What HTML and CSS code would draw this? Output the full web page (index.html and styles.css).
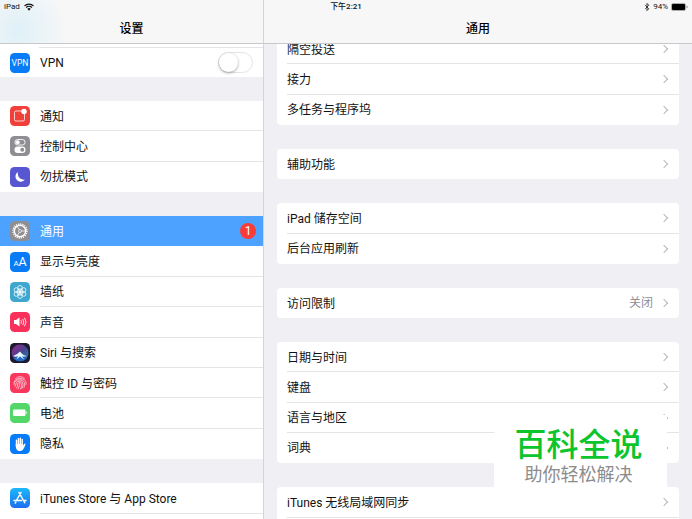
FILE: index.html
```html
<!DOCTYPE html>
<html lang="zh-CN">
<head>
    <meta charset="UTF-8">
    <meta name="viewport" content="width=device-width, initial-scale=1.0">
    <title>设置</title>
    <link rel="stylesheet" href="styles.css">
</head>
<body>
    <div class="status-bar">
        <div class="status-left">
            <span>iPad</span>
            <svg width="10" height="8" viewBox="0 0 20 15">
                <path d="M1 5.2a13 13 0 0 1 18 0M4.2 8.6a8.3 8.3 0 0 1 11.6 0" fill="none" stroke="#111" stroke-width="2.6"/>
                <path d="M10 14.8l-3.4-3.6a4.8 4.8 0 0 1 6.8 0z" fill="#111"/>
            </svg>
        </div>
        <div class="status-time">下午2:21</div>
        <div class="status-right">
            <svg width="6" height="8" viewBox="0 0 12 18">
                <path d="M2 5l8 8-4 4V1l4 4-8 8" fill="none" stroke="#222" stroke-width="1.9"/>
            </svg>
            <span>94%</span>
            <svg width="17" height="8" viewBox="0 0 17 8">
                <rect x="0.5" y="0.5" width="14" height="7" rx="1.5" fill="#fff" stroke="#777" stroke-width="0.6"/>
                <rect x="1" y="1" width="13" height="6" rx="1" fill="#000"/>
                <path d="M15.6 2.6v2.8q1-.4 1-1.4t-1-1.4z" fill="#777"/>
            </svg>
        </div>
    </div>

    <div class="split">
        <aside class="sidebar">
            <header class="title-bar title-bar-tint"><h1>设置</h1></header>
            <nav class="sidebar-list">
                <div class="group">
                    <div class="row row-vpn">
                        <svg class="icon" viewBox="0 0 40 40">
                            <rect width="40" height="40" rx="9" fill="#087bf7"/>
                            <text x="20" y="26" text-anchor="middle" font-size="17" fill="#fff">VPN</text>
                        </svg>
                        <label class="label" for="vpn">VPN</label>
                        <input class="switch" type="checkbox" id="vpn">
                    </div>
                </div>

                <div class="group rows-3">
                    <a class="row" href="#notifications">
                        <svg class="icon" viewBox="0 0 40 40">
                            <rect width="40" height="40" rx="9" fill="#f0403a"/>
                            <path d="M24 10H12a3 3 0 0 0-3 3v14a3 3 0 0 0 3 3h14a3 3 0 0 0 3-3V16" fill="none" stroke="#fff" stroke-opacity=".85" stroke-width="1.8"/>
                            <circle cx="28" cy="11" r="5.5" fill="#fff"/>
                        </svg>
                        <span class="label">通知</span>
                    </a>
                    <a class="row" href="#control">
                        <svg class="icon" viewBox="0 0 40 40">
                            <rect width="40" height="40" rx="9" fill="#8e8e93"/>
                            <rect x="9.8" y="7" width="20.4" height="11" rx="5.5" fill="none" stroke="#fff" stroke-width="1.8"/>
                            <circle cx="15.5" cy="12.5" r="4" fill="#fff"/>
                            <rect x="9" y="21" width="22" height="13" rx="6.5" fill="#fff"/>
                            <circle cx="24.5" cy="27.5" r="4" fill="#8e8e93"/>
                        </svg>
                        <span class="label">控制中心</span>
                    </a>
                    <a class="row" href="#dnd">
                        <svg class="icon" viewBox="0 0 40 40">
                            <rect width="40" height="40" rx="9" fill="#5856d0"/>
                            <path d="M16 10a10.5 10.5 0 1 0 14 15A12 12 0 0 1 16 10z" fill="#fff"/>
                        </svg>
                        <span class="label">勿扰模式</span>
                    </a>
                </div>

                <div class="group rows-8">
                    <a class="row row-active" href="#general" aria-current="page">
                        <svg class="icon" viewBox="0 0 40 40">
                            <rect width="40" height="40" rx="9" fill="#8e8e93"/>
                            <circle cx="20" cy="20" r="14" fill="none" stroke="#fff" stroke-width="2.6" stroke-dasharray="2.4 2"/>
                            <circle cx="20" cy="20" r="11.4" fill="none" stroke="#fff" stroke-width="3"/>
                            <circle cx="20" cy="20" r="3" fill="none" stroke="#fff" stroke-width="1.4"/>
                            <path d="M23 20h8M18.5 17.4l-4-7M18.5 22.6l-4 7" stroke="#fff" stroke-width="1.5"/>
                        </svg>
                        <span class="label">通用</span>
                        <span class="badge">1</span>
                    </a>
                    <a class="row" href="#display">
                        <svg class="icon" viewBox="0 0 40 40">
                            <rect width="40" height="40" rx="9" fill="#087bf7"/>
                            <text x="7" y="28" font-size="16" fill="#fff">A</text>
                            <text x="17" y="28" font-size="25" fill="#fff">A</text>
                        </svg>
                        <span class="label">显示与亮度</span>
                    </a>
                    <a class="row" href="#wallpaper">
                        <svg class="icon" viewBox="0 0 40 40">
                            <rect width="40" height="40" rx="9" fill="#3fa7cf"/>
                            <g fill="none" stroke="#fff" stroke-width="1.5">
                                <circle cx="20" cy="11.5" r="4.4"/>
                                <circle cx="27.4" cy="15.8" r="4.4"/>
                                <circle cx="27.4" cy="24.2" r="4.4"/>
                                <circle cx="20" cy="28.5" r="4.4"/>
                                <circle cx="12.6" cy="24.2" r="4.4"/>
                                <circle cx="12.6" cy="15.8" r="4.4"/>
                                <circle cx="20" cy="20" r="6.4"/>
                            </g>
                            <circle cx="20" cy="20" r="3.4" fill="#fff"/>
                        </svg>
                        <span class="label">墙纸</span>
                    </a>
                    <a class="row" href="#sounds">
                        <svg class="icon" viewBox="0 0 40 40">
                            <rect width="40" height="40" rx="9" fill="#f9305c"/>
                            <path d="M8 16h4l7-5v18l-7-5H8z" fill="#fff"/>
                            <path d="M22 16.5q2 3.5 0 7M25.5 14q4 6 0 12M29 11.500q6 8.5 0 17" fill="none" stroke="#fff" stroke-width="1.7"/>
                        </svg>
                        <span class="label">声音</span>
                    </a>
                    <a class="row" href="#siri">
                        <svg class="icon" viewBox="0 0 40 40">
                            <defs>
                                <linearGradient id="siri-ring" x1="0" y1="0" x2="1" y2="1">
                                    <stop offset="0" stop-color="#c22b9a"/>
                                    <stop offset=".5" stop-color="#5b4fb0"/>
                                    <stop offset="1" stop-color="#19b7d6"/>
                                </linearGradient>
                            </defs>
                            <rect width="40" height="40" rx="9" fill="#1b1a30"/>
                            <circle cx="20" cy="20" r="17" fill="url(#siri-ring)" fill-opacity=".75"/>
                            <path d="M7 31q9-7 13-6 6-1 13 6-5 5-13 5T7 31z" fill="#2468c8"/>
                            <path d="M6 26q9-3 14-9 6 8 13 9-5 2-9 0l4 7-8-6-7 6 3-7q-4 3-10 0z" fill="#e6f6ff"/>
                        </svg>
                        <span class="label">Siri 与搜索</span>
                    </a>
                    <a class="row" href="#touchid">
                        <svg class="icon" viewBox="0 0 40 40">
                            <rect width="40" height="40" rx="9" fill="#f9365c"/>
                            <g fill="none" stroke="#fff" stroke-opacity=".9" stroke-width="1.4" stroke-linecap="round">
                                <path d="M11 11q9-8 18 0M8 18q2-7 12-7.5 10 .5 12 7.5v5M8 23q0-9 12-9.5 9 .5 9 9.5 0 3-1 6"/>
                                <path d="M10 27q2-3 2-6 1-5 8-5 6 1 6 7 0 4-2 8M13 30q3-4 2-8 1-3 5-3 3 1 3 5 0 4-2 8M16 32q3-5 3-10"/>
                            </g>
                        </svg>
                        <span class="label">触控 ID 与密码</span>
                    </a>
                    <a class="row" href="#battery">
                        <svg class="icon" viewBox="0 0 40 40">
                            <rect width="40" height="40" rx="9" fill="#53d769"/>
                            <rect x="6" y="13" width="25" height="13" rx="2" fill="#fff"/>
                            <path d="M32.5 17v5q2-.5 2-2.500t-2-2.500z" fill="#fff"/>
                        </svg>
                        <span class="label">电池</span>
                    </a>
                    <a class="row" href="#privacy">
                        <svg class="icon" viewBox="0 0 40 40">
                            <rect width="40" height="40" rx="9" fill="#087bf7"/>
                            <path d="M13 24V12.500M16.800 22V9.500M20.600 22V8.500M24.400 22V11" stroke="#fff" stroke-width="2.900" stroke-linecap="round"/>
                            <path d="M11.600 20h14.300v3l3-3.500q2-1.500 2.300.5-2 7-5 11-2.500 3-7 3-7.600 0-7.600-10z" fill="#fff"/>
                        </svg>
                        <span class="label">隐私</span>
                    </a>
                </div>

                <div class="group rows-2">
                    <a class="row" href="#store">
                        <svg class="icon" viewBox="0 0 40 40">
                            <defs>
                                <linearGradient id="store-bg" x1="0" y1="0" x2="0" y2="1">
                                    <stop offset="0" stop-color="#1cb8f8"/>
                                    <stop offset="1" stop-color="#1d6ff0"/>
                                </linearGradient>
                            </defs>
                            <rect width="40" height="40" rx="9" fill="url(#store-bg)"/>
                            <path d="M22 9L12.500 25.500M18 9l11.500 20.500M8 25h15M27.500 25H32M11.500 28.500l-1 1.500" stroke="#fff" stroke-width="3" stroke-linecap="round"/>
                        </svg>
                        <span class="label">iTunes Store 与 App Store</span>
                    </a>
                    <div class="row">
                        <svg class="icon" viewBox="0 0 40 40"><rect width="40" height="40" rx="9" fill="#8e8e93"/></svg>
                    </div>
                </div>
            </nav>
        </aside>

        <main class="detail">
            <header class="title-bar"><h2>通用</h2></header>
            <div class="detail-list">
                <div class="group card rows-3">
                    <a class="row" href="#airdrop"><span class="label">隔空投送</span><span class="chevron"></span></a>
                    <a class="row" href="#handoff"><span class="label">接力</span><span class="chevron"></span></a>
                    <a class="row" href="#dock"><span class="label">多任务与程序坞</span><span class="chevron"></span></a>
                </div>
                <div class="group card">
                    <a class="row" href="#accessibility"><span class="label">辅助功能</span><span class="chevron"></span></a>
                </div>
                <div class="group card rows-2">
                    <a class="row" href="#storage"><span class="label">iPad 储存空间</span><span class="chevron"></span></a>
                    <a class="row" href="#refresh"><span class="label">后台应用刷新</span><span class="chevron"></span></a>
                </div>
                <div class="group card">
                    <a class="row" href="#restrictions"><span class="label">访问限制</span><span class="value">关闭</span><span class="chevron"></span></a>
                </div>
                <div class="group card rows-4">
                    <a class="row" href="#date"><span class="label">日期与时间</span><span class="chevron"></span></a>
                    <a class="row" href="#keyboard"><span class="label">键盘</span><span class="chevron"></span></a>
                    <a class="row" href="#language"><span class="label">语言与地区</span><span class="chevron"></span></a>
                    <a class="row" href="#dictionary"><span class="label">词典</span><span class="chevron"></span></a>
                </div>
                <div class="group card rows-2">
                    <a class="row" href="#wifi-sync"><span class="label">iTunes 无线局域网同步</span><span class="chevron"></span></a>
                    <div class="row"></div>
                </div>
            </div>
        </main>
    </div>

    <div class="watermark">
        <strong>百科全说</strong>
        <span>助你轻松解决</span>
    </div>
</body>
</html>
```
FILE: styles.css
```css
* {
    box-sizing: border-box;
}
body {
    margin: 0;
    height: 100vh;
    overflow: hidden;
    position: relative;
    font-family: Roboto, "Noto Sans CJK SC", sans-serif;
    font-size: 12px;
    line-height: 18px;
    color: #111;
    background-color: #efeff4;
}
a {
    color: inherit;
    text-decoration: none;
}

/* status bar, lies over both title bars */
.status-bar {
    position: absolute;
    top: 0;
    left: 0;
    right: 0;
    z-index: 2;
    display: grid;
    grid-template-columns: 1fr auto 1fr;
    padding: 0 4px;
    font-size: 8px;
    line-height: 14px;
}
.status-left, .status-right {
    display: flex;
    align-items: center;
    gap: 4px;
}
.status-right {
    justify-content: flex-end;
    gap: 3px;
}
.status-time {
    font-weight: 500;
}

.split {
    display: grid;
    grid-template-columns: minmax(264px, 38%) 1fr;
    height: 100%;
}
.sidebar, .detail {
    min-width: 0;
    overflow: hidden;
}
.sidebar {
    border-right: 1px solid #d4d4d8;
}
.title-bar {
    position: relative;
    z-index: 1;
    height: 44px;
    padding-top: 14px;
    text-align: center;
    background-color: #f7f7f7;
    border-bottom: 1px solid #c8c8ca;
}
.title-bar-tint {
    background-image: radial-gradient(circle at 18px 30px, #dff0f8, #f7f7f7 50px);
}
.title-bar h1, .title-bar h2 {
    margin: 0;
    font-size: 12px;
    line-height: 30px;
    font-weight: 500;
    color: #000;
}

/* lists */
.sidebar-list, .detail-list {
    display: flex;
    flex-direction: column;
    gap: 24px;
}
.sidebar-list {
    padding-top: 3px;
    background-color: #efeff4;
}
.sidebar-list .group:first-child {
    box-shadow: 0 -4px 0 #fff;
}
.detail-list {
    margin-top: -10px;
    padding: 0 13px;
}
.group {
    display: grid;
    grid-auto-rows: 1fr;
    min-height: 30px;
    background-color: #fff;
}
.card {
    border-radius: 4px;
}
.rows-2 {
    min-height: 61px;
}
.rows-3 {
    min-height: 91px;
}
.rows-4 {
    min-height: 121px;
}
.rows-8 {
    min-height: 243px;
}
.row {
    display: flex;
    align-items: center;
    gap: 10px;
    padding: 0 10px;
    background: linear-gradient(#e4e4e7, #e4e4e7) 40px 100% / 100% 1px no-repeat;
}
.card .row {
    background-position: 10px 100%;
}
.row:last-child {
    background: none;
}
.row-vpn {
    border-top: 1px solid #e4e4e7;
    border-image: linear-gradient(to right, #fff 40px, #e4e4e7 40px) 1;
}
.sidebar .row-active {
    background: #4da2ff;
    color: #fff;
}
.icon {
    width: 20px;
    height: 20px;
    flex: none;
}
.label {
    flex: 1;
    padding-top: 1px;
    white-space: nowrap;
}
.value {
    color: #8e8e93;
}
.chevron {
    width: 6px;
    height: 6px;
    margin-right: 2px;
    border-top: 1px solid #b8b8bd;
    border-right: 1px solid #b8b8bd;
    transform: rotate(45deg);
}
.value + .chevron {
    margin-left: -2px;
}
.badge {
    width: 16px;
    height: 16px;
    margin-right: -3px;
    border-radius: 8px;
    background-color: #fa3c38;
    line-height: 16px;
    text-align: center;
}
.switch {
    appearance: none;
    width: 35px;
    height: 21px;
    margin: 0;
    border: 1px solid #e4e4e4;
    border-radius: 11px;
    background-color: #fff;
}
.switch::before {
    content: "";
    display: block;
    width: 19px;
    height: 19px;
    border-radius: 50%;
    background-color: #fff;
    box-shadow: 0 1px 3px rgba(0, 0, 0, 0.35);
}
.switch:checked {
    background-color: #4cd964;
}
.switch:checked::before {
    margin-left: 14px;
}

.watermark {
    position: absolute;
    right: 25px;
    bottom: 22px;
    z-index: 3;
    display: flex;
    flex-direction: column;
    align-items: center;
    width: 173px;
    padding: 12px 4px 10px 0;
    background-color: #fff;
}
.watermark strong {
    font-size: 32px;
    line-height: 36px;
    font-weight: 500;
    color: #0cc42c;
}
.watermark span {
    font-size: 18px;
    line-height: 24px;
    color: #8c8c8c;
}
```
